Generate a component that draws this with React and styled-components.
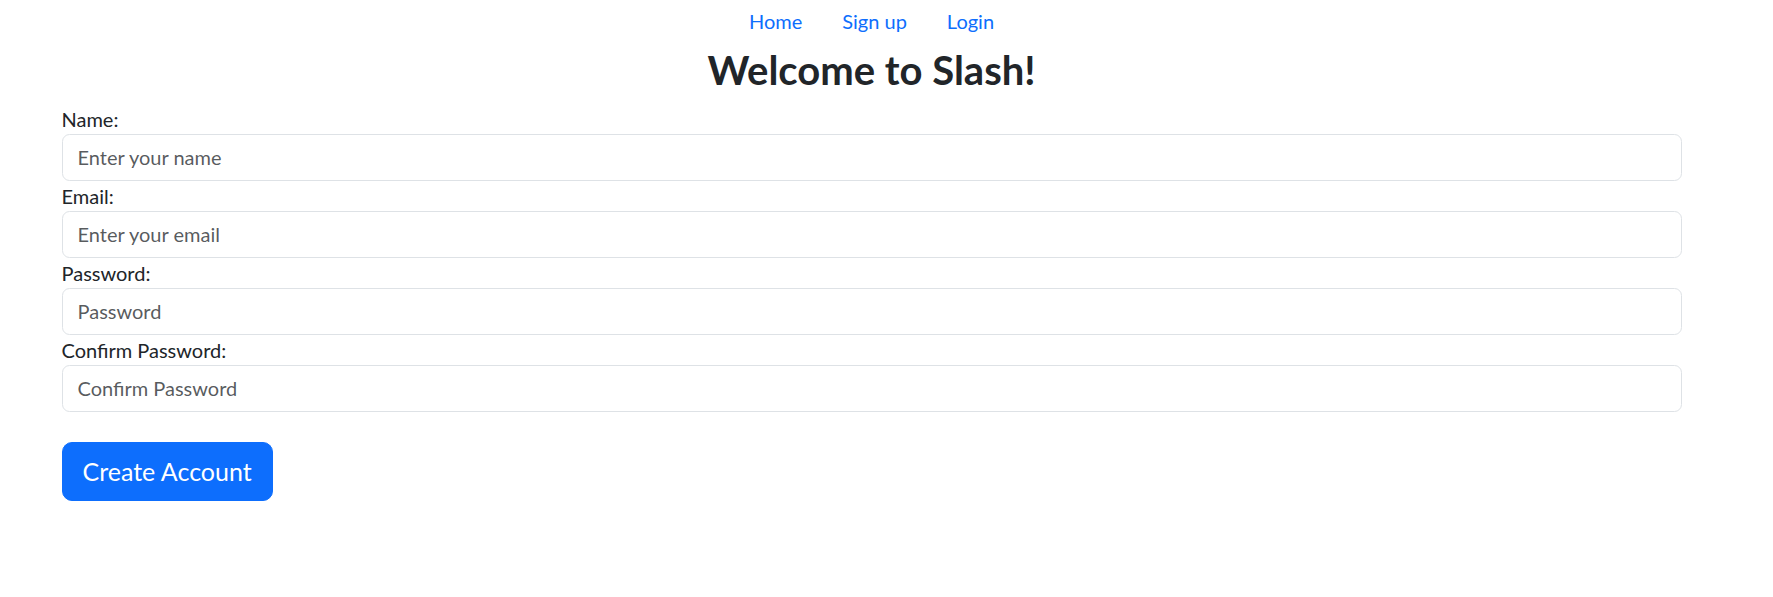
// signup page: nav links, title, and the account form
import styled, { createGlobalStyle } from 'styled-components'

const GlobalStyle = createGlobalStyle`
  body {
    margin: 0;
    background: #fff;
    color: #212529;
    font-family: Lato, 'Segoe UI', 'Liberation Sans', sans-serif;
    font-size: 20px;
    line-height: 1.5;
  }
  * {
    box-sizing: border-box;
  }
`

const Page = styled.div`
  width: calc(100% - 30px);
`

const Nav = styled.ul`
  display: flex;
  justify-content: center;
  list-style: none;
  margin: 0;
  padding: 0;
`

const NavLink = styled.a`
  display: block;
  padding: 5.5px 20px 10px;
  color: #0d6efd;
  text-decoration: none;
  font-size: 20px;
  line-height: 30px;
  cursor: pointer;
`

const Title = styled.h2`
  margin: 0 0 10px;
  text-align: center;
  font-size: 40px;
  font-weight: 700;
  line-height: 48px;
  color: #212529;
`

const Container = styled.div`
  max-width: 1650px;
  margin: 0 auto;
  padding: 0 15px;
`

const Form = styled.form`
  display: flex;
  flex-direction: column;
`

const Field = styled.div`
  display: flex;
  flex-direction: column;
`

const Label = styled.label`
  font-size: 20px;
  line-height: 30px;
  color: #212529;
`

const Input = styled.input`
  display: block;
  width: 100%;
  padding: 7.5px 15px;
  font-family: inherit;
  font-size: 20px;
  line-height: 30px;
  color: #212529;
  background: #fff;
  border: 1px solid #dee2e6;
  border-radius: 7.5px;
  outline: none;

  &::placeholder {
    color: rgba(33, 37, 41, 0.75);
  }
`

const SubmitBtn = styled.button`
  align-self: flex-start;
  margin-top: 30px;
  padding: 10px 20px;
  font-family: inherit;
  font-size: 25px;
  line-height: 37.5px;
  color: #fff;
  background: #0d6efd;
  border: 1px solid #0d6efd;
  border-radius: 10px;
  cursor: pointer;
`

const fields = [
  { id: 'name', label: 'Name:', type: 'text', placeholder: 'Enter your name' },
  { id: 'email', label: 'Email:', type: 'email', placeholder: 'Enter your email' },
  { id: 'password', label: 'Password:', type: 'password', placeholder: 'Password' },
  { id: 'confirm', label: 'Confirm Password:', type: 'password', placeholder: 'Confirm Password' },
]

const App = () => {
  return (
    <Page>
      <GlobalStyle />
      <Nav>
        <li><NavLink>Home</NavLink></li>
        <li><NavLink>Sign up</NavLink></li>
        <li><NavLink>Login</NavLink></li>
      </Nav>
      <Title>Welcome to Slash!</Title>
      <Container>
        <Form onSubmit={(e) => e.preventDefault()}>
          {fields.map((f) => (
            <Field key={f.id}>
              <Label htmlFor={f.id}>{f.label}</Label>
              <Input id={f.id} type={f.type} placeholder={f.placeholder} />
            </Field>
          ))}
          <SubmitBtn type='submit'>Create Account</SubmitBtn>
        </Form>
      </Container>
    </Page>
  )
}

export default App
